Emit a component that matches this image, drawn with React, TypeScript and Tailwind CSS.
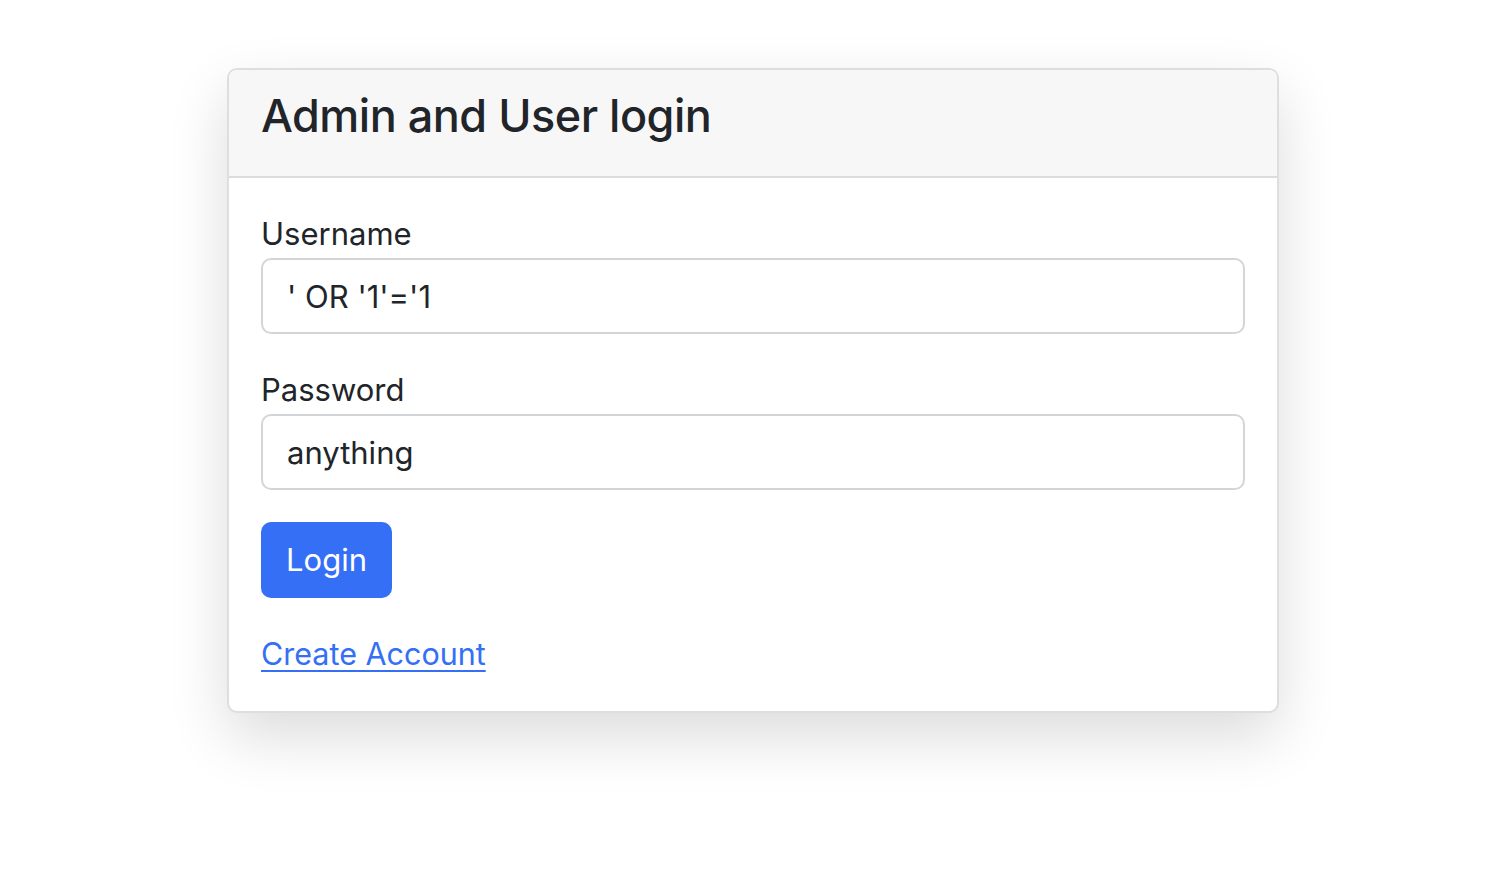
export default function App() {
  return (
    <div className="min-h-screen bg-white font-['Inter','Liberation_Sans',sans-serif] text-[#212529]">
      <div className="ml-[227px] w-[1052px] pt-[68px]">
        <div className="overflow-hidden rounded-[10px] border-2 border-[#dedede] bg-white shadow-[0_24px_60px_rgba(0,0,0,0.14)]">
          <div className="flex h-[108px] items-center border-b-2 border-[#dcdcdc] bg-[#f7f7f7] px-[32px] pb-[14px]">
            <h3 className="text-[45px] font-medium leading-[1.2] tracking-[-0.5px]">Admin and User login</h3>
          </div>
          <div className="px-[32px] pb-[28px] pt-[32px]">
            <div className="mb-[32px]">
              <label className="block text-[31px] leading-[48px]">Username</label>
              <input
                className="block h-[76px] w-full rounded-[10px] border-2 border-[#d3d6d9] px-[24px] text-[31px] text-[#212529] outline-none"
                defaultValue="' OR '1'='1"
              />
            </div>
            <div className="mb-[32px]">
              <label className="block text-[31px] leading-[48px]">Password</label>
              <input
                className="block h-[76px] w-full rounded-[10px] border-2 border-[#d3d6d9] px-[24px] text-[31px] text-[#212529] outline-none"
                defaultValue="anything"
              />
            </div>
            <button className="block h-[76px] w-[131px] rounded-[10px] bg-[#346ff5] text-[31px] text-white">Login</button>
            <div className="mt-[32px] leading-[48px]">
              <a href="#" className="text-[30.5px] text-[#346ff5] underline decoration-2 underline-offset-[5px]">Create Account</a>
            </div>
          </div>
        </div>
      </div>
    </div>
  );
}
